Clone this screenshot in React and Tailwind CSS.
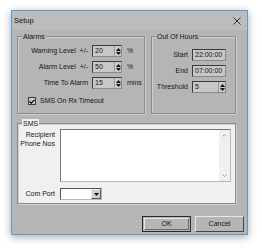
import React from 'react'

const FONT = { fontFamily: '"Liberation Sans", Arial, sans-serif' }

function Group({ label, className, legendBg = 'bg-[#b5b5b5]', children }) {
  return (
    <div className={`relative border border-[#8c8c8c] shadow-[inset_1px_1px_0_#cfcfcf,1px_1px_0_#cfcfcf] ${className}`}>
      <span className={`absolute -top-[5px] left-[4px] px-[1px] leading-[9px] ${legendBg}`}>{label}</span>
      {children}
    </div>
  )
}

function Spinner() {
  return (
    <div className="flex h-full w-[7px] flex-col items-center justify-center gap-[1px] border-l border-[#9a9a9a] bg-[#c9c9c9]">
      <svg width="5" height="3" viewBox="0 0 5 3"><path d="M0 3 L2.5 0 L5 3 Z" fill="#111" /></svg>
      <svg width="5" height="3" viewBox="0 0 5 3"><path d="M0 0 L2.5 3 L5 0 Z" fill="#111" /></svg>
    </div>
  )
}

function Field({ value, width, spin }) {
  return (
    <div className={`flex h-[12px] items-stretch border border-[#8a8a8a] border-l-[#3c3c3c] border-t-[#3c3c3c] bg-[#c7c7c7] ${width}`}>
      <span className="flex-1 pl-[2px] leading-[10px]">{value}</span>
      {spin && <Spinner />}
    </div>
  )
}

function Row({ label, value, unit, labelW, fieldW, spin }) {
  return (
    <div className="flex h-[12px] items-center">
      <span className={`whitespace-pre text-right ${labelW}`}>{label}</span>
      <div className="ml-[4px]">
        <Field value={value} width={fieldW} spin={spin} />
      </div>
      {unit && <span className="ml-[5px]">{unit}</span>}
    </div>
  )
}

export default function App() {
  return (
    <div className="h-[250px] w-[262px] bg-white pt-[10px] pl-[11px] text-[7px] text-[#151515]" style={FONT}>
      <div className="flex h-[225px] w-[237px] flex-col border border-[#5b9bd5] bg-[#b5b5b5] shadow-[0_2px_8px_rgba(0,0,0,0.35)]">
        {/* title bar */}
        <div className="flex h-[19px] items-center justify-between bg-[#bcbcbc] pl-[2px] pr-[6px]">
          <span className="text-[7.5px]">Setup</span>
          <svg width="8" height="8" viewBox="0 0 8 8"><path d="M0.5 0.5 L7.5 7.5 M7.5 0.5 L0.5 7.5" stroke="#333" strokeWidth="1" /></svg>
        </div>

        <div className="ml-[5px] mt-[6px] w-[219px]">
          <div className="flex gap-[6px]">
            <Group label="Alarms" className="h-[78px] w-[128px]">
              <div className="flex flex-col gap-[4px] pt-[8px]">
                <Row label="Warning Level  +/-" value="20" unit="%" labelW="w-[70px]" fieldW="w-[30px]" spin />
                <Row label="Alarm Level  +/-" value="50" unit="%" labelW="w-[70px]" fieldW="w-[30px]" spin />
                <Row label="Time To Alarm" value="15" unit="mins" labelW="w-[70px]" fieldW="w-[30px]" spin />
              </div>
              <div className="mt-[7px] ml-[10px] flex items-center gap-[4px]">
                <div className="flex h-[8px] w-[8px] items-center justify-center border border-[#3c3c3c] bg-[#c9c9c9]">
                  <svg width="6" height="5" viewBox="0 0 6 5"><path d="M0.5 2.5 L2.2 4.2 L5.5 0.8" stroke="#000" strokeWidth="1.2" fill="none" /></svg>
                </div>
                <span>SMS On Rx Timeout</span>
              </div>
            </Group>
            <Group label="Out Of Hours" className="h-[78px] w-[85px]">
              <div className="flex flex-col gap-[4px] pt-[12px]">
                <Row label="Start" value="22:00:00" labelW="w-[36px]" fieldW="w-[34px]" />
                <Row label="End" value="07:00:00" labelW="w-[36px]" fieldW="w-[34px]" />
                <Row label="Threshold" value="5" labelW="w-[36px]" fieldW="w-[34px]" spin />
              </div>
            </Group>
          </div>

          <Group label="SMS" legendBg="bg-[#f0f0f0]" className="mt-[9px] h-[81px] bg-[#f0f0f0]">
            <div className="flex pt-[5px]">
              <div className="w-[37px] pt-[1px] text-right leading-[9px]">
                Recipient<br />Phone Nos
              </div>
              <div className="ml-[5px] flex h-[53px] w-[171px] border border-[#b8b8b8] border-l-[#777] border-t-[#777] bg-white">
                <div className="flex-1" />
                <div className="flex w-[11px] flex-col items-center justify-between bg-[#f0f0f0] py-[4px]">
                  <svg width="5" height="3" viewBox="0 0 5 3"><path d="M0.5 2.5 L2.5 0.5 L4.5 2.5" stroke="#a6a6a6" fill="none" /></svg>
                  <svg width="5" height="3" viewBox="0 0 5 3"><path d="M0.5 0.5 L2.5 2.5 L4.5 0.5" stroke="#a6a6a6" fill="none" /></svg>
                </div>
              </div>
            </div>
            <div className="mt-[6px] flex items-center">
              <span className="w-[37px] text-right">Com Port</span>
              <div className="ml-[5px] flex h-[12px] w-[42px] border border-[#b8b8b8] border-l-[#555] border-t-[#555] bg-white">
                <div className="flex-1" />
                <div className="flex w-[10px] items-center justify-center border border-[#eee] border-b-[#555] border-r-[#555] bg-[#cfcfcf]">
                  <svg width="5" height="3" viewBox="0 0 5 3"><path d="M0 0 L2.5 3 L5 0 Z" fill="#111" /></svg>
                </div>
              </div>
            </div>
          </Group>
        </div>

        <div className="mt-[12px] flex justify-end gap-[4px] pr-[3px]">
          <button className="flex h-[16px] w-[49px] items-center justify-center border border-[#2a2a2a] bg-[#b5b5b5] p-[1px]">
            <span className="flex h-full w-full items-center justify-center border border-[#e6e6e6] border-b-[#6a6a6a] border-r-[#6a6a6a]">OK</span>
          </button>
          <button className="flex h-[16px] w-[49px] items-center justify-center border border-[#e6e6e6] border-b-[#444] border-r-[#444] bg-[#b5b5b5]">
            Cancel
          </button>
        </div>
      </div>
    </div>
  )
}
